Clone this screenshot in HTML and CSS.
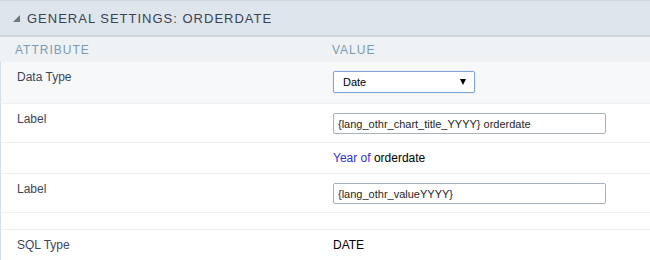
FILE: index.html
```html
<!DOCTYPE html>
<html lang="en">
<head>
    <meta charset="UTF-8">
    <meta name="viewport" content="width=device-width, initial-scale=1.0">
    <title>General Settings</title>
    <link rel="stylesheet" href="styles.css">
</head>
<body>
    <div class="panel">
        <div class="panel-title">
            <span class="toggle"></span>
            <span>General Settings: orderdate</span>
        </div>

        <div class="row head">
            <div class="cell">Attribute</div>
            <div class="cell">Value</div>
        </div>

        <div class="row shaded">
            <div class="cell name">Data Type</div>
            <div class="cell">
                <div class="select-wrap">
                    <select class="select">
                        <option>Date</option>
                    </select>
                    <span class="arrow"></span>
                </div>
            </div>
        </div>

        <div class="row">
            <div class="cell name">Label</div>
            <div class="cell">
                <input class="field wide" type="text" value="{lang_othr_chart_title_YYYY} orderdate">
            </div>
        </div>

        <div class="row">
            <div class="cell name"></div>
            <div class="cell text"><span class="hint">Year of</span> orderdate</div>
        </div>

        <div class="row">
            <div class="cell name">Label</div>
            <div class="cell">
                <input class="field wide" type="text" value="{lang_othr_valueYYYY}">
            </div>
        </div>

        <div class="row empty">
            <div class="cell name"></div>
            <div class="cell"></div>
        </div>

        <div class="row">
            <div class="cell name">SQL Type</div>
            <div class="cell text">DATE</div>
        </div>
    </div>
</body>
</html>
```

FILE: styles.css
```css
body {
    margin: 0;
    font-family: "Liberation Sans", Arial, sans-serif;
    background: #ffffff;
}

.panel {
    width: 650px;
}

.panel-title {
    display: flex;
    align-items: center;
    gap: 7px;
    height: 34px;
    padding-left: 13px;
    background: #dfe5ec;
    border-top: 1px solid #cfd8df;
    border-bottom: 2px solid #cfd8df;
    color: #3b4252;
    font-size: 13px;
    letter-spacing: 1px;
    text-transform: uppercase;
}

.toggle {
    width: 0;
    height: 0;
    margin-top: 1px;
    border-left: 7px solid transparent;
    border-bottom: 7px solid #6f7780;
}

.row {
    display: grid;
    grid-template-columns: 316px 1fr;
    border-bottom: 1px solid #edf0f4;
    border-left: 1px solid #d3dee7;
}

.row.head {
    height: 25px;
    align-items: center;
    background: #eef2f5;
    border-left: none;
    border-bottom: none;
    font-size: 11px;
    letter-spacing: 1px;
    color: #7a9bb1;
    text-transform: uppercase;
}

.row.shaded {
    background: #f7f8fa;
}

.row.shaded .cell {
    padding-bottom: 10px;
}

.cell {
    padding: 9px 16px 8px;
    font-size: 12px;
    line-height: 14px;
    color: #000000;
}

.row.head .cell {
    padding: 1px 16px 0 15px;
    color: #7a9bb1;
}

.row.head .cell + .cell {
    padding-left: 16px;
}

.cell.name {
    padding-top: 8px;
    color: #3d4559;
}

.cell.text {
    padding: 8px 16px;
    line-height: 14px;
}

.row.empty .cell {
    padding: 0;
    height: 16px;
}

.hint {
    color: #2f2fd8;
}

.select-wrap {
    position: relative;
    width: 142px;
}

.select {
    appearance: none;
    display: block;
    width: 142px;
    height: 22px;
    padding: 0 20px 0 9px;
    border: 1px solid #7fa6da;
    border-radius: 2px;
    background: #ffffff;
    font-family: "Liberation Sans", Arial, sans-serif;
    font-size: 11px;
    color: #000000;
    box-shadow: 0 0 1px #9fc0ea;
}

.arrow {
    position: absolute;
    right: 9px;
    top: 8px;
    width: 0;
    height: 0;
    border-left: 3.5px solid transparent;
    border-right: 3.5px solid transparent;
    border-top: 6px solid #000000;
}

.field {
    display: block;
    height: 21px;
    padding: 0 4px;
    border: 1px solid #a8b0ba;
    border-radius: 2px;
    font-family: "Liberation Sans", Arial, sans-serif;
    font-size: 11px;
    color: #1f1f1f;
    box-sizing: border-box;
}

.field.wide {
    width: 273px;
}
```
